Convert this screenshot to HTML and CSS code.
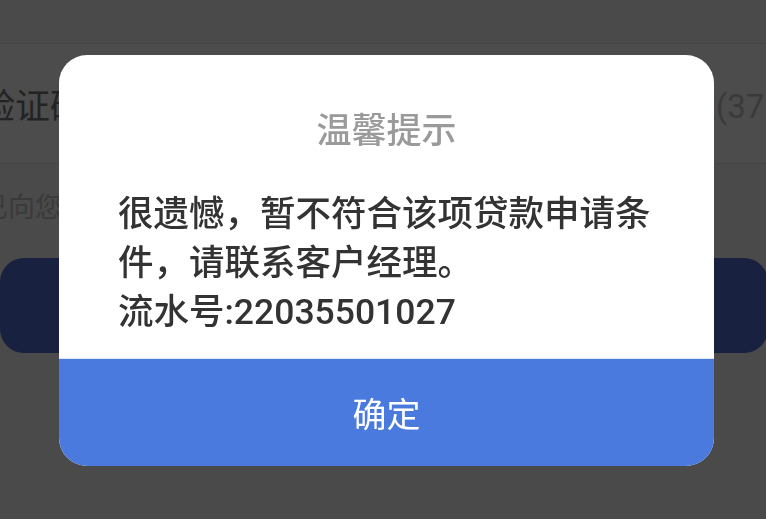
FILE: index.html
```html
<!DOCTYPE html>
<html>
<head>
<meta charset="UTF-8">
<title>温馨提示</title>
<link rel="stylesheet" href="styles.css">
</head>
<body>
  <div class="page">
    <div class="top-bar"></div>
    <div class="form-row">
      <span class="label">验证码</span>
      <span class="timer">重新获取(37s)</span>
    </div>
    <p class="tip">已向您尾号8866的手机发送短信验证码</p>
    <button class="submit">确认申请</button>
  </div>

  <!-- 遮罩层 -->
  <div class="mask"></div>

  <div class="dialog-wrap">
    <div class="dialog">
      <div class="dialog-title">温馨提示</div>
      <div class="dialog-body">
        很遗憾，暂不符合该项贷款申请条件，请联系客户经理。<br>
        流水号:22035501027
      </div>
      <button class="dialog-btn">确定</button>
    </div>
  </div>
</body>
</html>
```

FILE: styles.css
```css
body {
  margin: 0;
  width: 766px;
  height: 519px;
  overflow: hidden;
  background-color: #f7f7f7;
  font-family: "Noto Sans CJK SC", "Noto Sans", sans-serif;
}

.page {
  height: 100%;
}

.top-bar {
  height: 43px;
  border-bottom: 1px solid #e6e6e6;
}

.form-row {
  display: grid;
  grid-template-columns: 604px auto;
  align-items: center;
  height: 119px;
  margin-left: -20px;
  background-color: #fff;
  border-bottom: 1px solid #e6e6e6;
  white-space: nowrap;
}

.label {
  font-size: 35px;
  color: #777;
}

.timer {
  font-family: Roboto, "Noto Sans CJK SC", sans-serif;
  font-size: 33px;
  color: #c4c4c4;
}

.tip {
  margin: 22px 0 0 -19px;
  font-size: 27px;
  line-height: 40px;
  color: #c2c2c2;
  white-space: nowrap;
}

.submit {
  display: block;
  width: 768px;
  height: 95px;
  margin-top: 32px;
  border: none;
  border-radius: 24px;
  background-color: #5371d2;
  color: #fff;
  font-family: inherit;
  font-size: 34px;
}

/* 遮罩 */
.mask {
  position: fixed;
  top: 0;
  left: 0;
  right: 0;
  bottom: 0;
  background-color: rgba(0, 0, 0, 0.7);
}

.dialog-wrap {
  position: fixed;
  top: 0;
  left: 0;
  right: 0;
  bottom: 0;
  display: flex;
  justify-content: center;
  align-items: center;
  padding: 2px 0 0 7px;
}

.dialog {
  width: 655px;
  background-color: #fff;
  border-radius: 28px;
  overflow: hidden;
}

.dialog-title {
  padding-top: 48px;
  font-size: 35px;
  line-height: 49px;
  font-weight: 500;
  color: #9a9a9a;
  text-align: center;
}

.dialog-body {
  margin-top: 38px;
  padding: 0 60px 21px 59px;
  font-family: Roboto, "Noto Sans CJK SC", sans-serif;
  font-size: 35.5px;
  line-height: 49px;
  font-weight: 500;
  color: #333;
}

.dialog-btn {
  display: block;
  width: 100%;
  height: 108px;
  border: none;
  border-top: 1px solid #dfe6f5;
  background-color: #4a7ade;
  color: #fff;
  font-family: inherit;
  font-size: 34px;
}
```
